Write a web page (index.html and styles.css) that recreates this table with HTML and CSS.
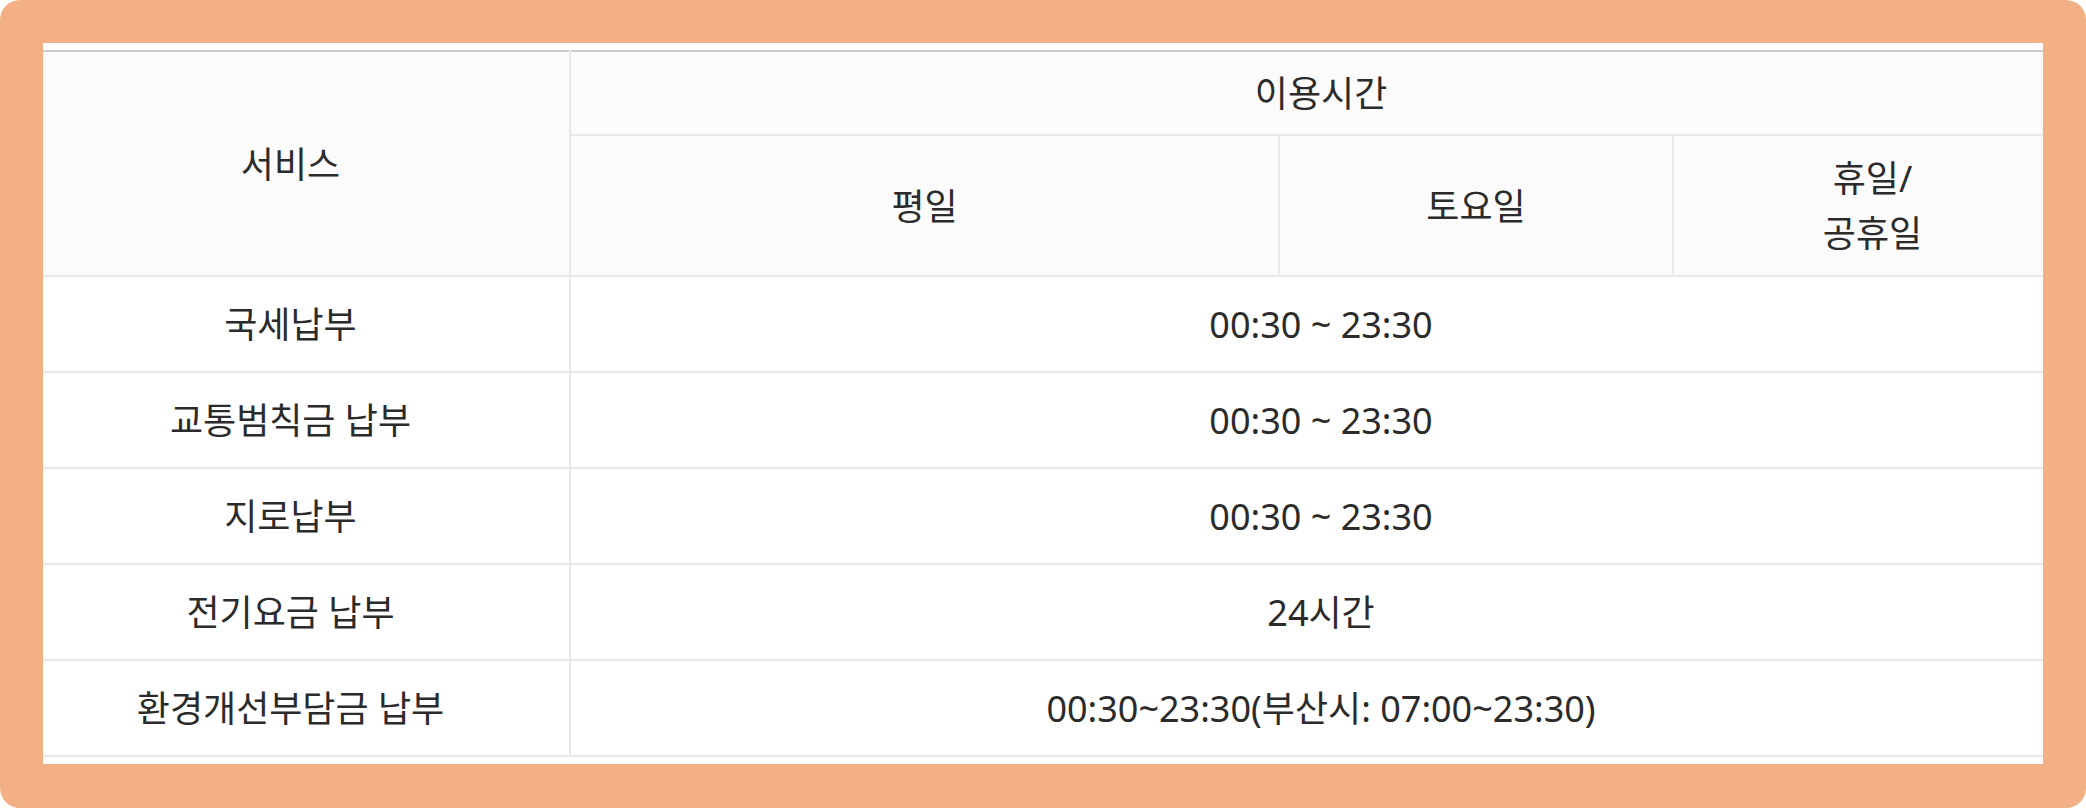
FILE: index.html
```html
<!DOCTYPE html>
<html lang="ko">
<head>
<meta charset="utf-8">
<title>이용시간</title>
<link rel="stylesheet" href="styles.css">
</head>
<body>
<div class="frame">
  <div class="panel">
    <table class="hours">
      <colgroup>
        <col class="c-service">
        <col class="c-week">
        <col class="c-sat">
        <col class="c-hol">
      </colgroup>
      <thead>
        <tr class="head-top">
          <th rowspan="2">서비스</th>
          <th colspan="3">이용시간</th>
        </tr>
        <tr class="head-sub">
          <th>평일</th>
          <th>토요일</th>
          <th>휴일/<br>공휴일</th>
        </tr>
      </thead>
      <tbody>
        <tr><td>국세납부</td><td colspan="3">00:30 ~ 23:30</td></tr>
        <tr><td>교통범칙금 납부</td><td colspan="3">00:30 ~ 23:30</td></tr>
        <tr><td>지로납부</td><td colspan="3">00:30 ~ 23:30</td></tr>
        <tr><td>전기요금 납부</td><td colspan="3">24시간</td></tr>
        <tr><td>환경개선부담금 납부</td><td colspan="3">00:30~23:30(부산시: 07:00~23:30)</td></tr>
      </tbody>
    </table>
  </div>
</div>
</body>
</html>
```

FILE: styles.css
```css
html, body {
  margin: 0;
  padding: 0;
  background: #ffffff;
}

.frame {
  box-sizing: border-box;
  width: 2086px;
  height: 808px;
  padding: 43px 43px 44px;
  background: #f3b085;
  border-radius: 20px;
}

.panel {
  box-sizing: border-box;
  height: 100%;
  padding-top: 7px;
  background: #ffffff;
  overflow: hidden;
}

.hours {
  width: 2059px;
  margin-left: -31px;
  table-layout: fixed;
  border-collapse: collapse;
  border-top: 2px solid #cbcbcb;
  font-family: "Noto Sans", "Noto Sans CJK KR", sans-serif;
  font-size: 36px;
  line-height: 55px;
  color: #2b2b2b;
}

.c-service { width: 558px; }
.c-week { width: 709px; }
.c-sat { width: 394px; }
.c-hol { width: 398px; }

.hours th,
.hours td {
  text-align: center;
  vertical-align: middle;
  border-bottom: 2px solid #e8e8e8;
  border-left: 2px solid #e8e8e8;
  font-weight: 400;
}

.hours th:first-child,
.hours td:first-child {
  border-left: none;
}

.hours thead th {
  background: #fbfbfb;
}

.head-top th {
  padding: 14px 0 13px;
}

.head-sub th {
  padding: 15px 0 14px;
}

.head-sub th:first-child {
  border-left: 2px solid #e8e8e8;
}

.hours td {
  padding: 20px 0 19px;
}
```
